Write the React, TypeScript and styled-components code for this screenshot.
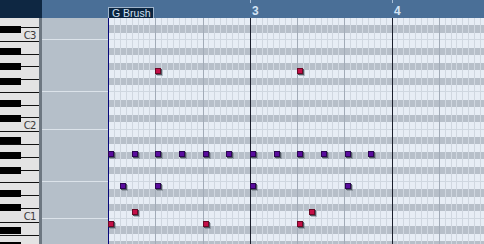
import React from 'react';
import styled, { createGlobalStyle } from 'styled-components';

const GlobalStyle = createGlobalStyle`
  html, body { margin: 0; padding: 0; background: #b6bfc9; overflow: hidden; }
  #root { width: 484px; height: 244px; }
`;

const ROW = 7.445;
const COL = 47.333 / 8;
const C3_BOTTOM = 22.6; // body coordinates
const WHITE = (ROW * 12) / 7;
const BODY_H = 226;

const NAMES = ['C', 'C#', 'D', 'D#', 'E', 'F', 'F#', 'G', 'G#', 'A', 'A#', 'B'];
const isBlack = (n: number) => NAMES[n % 12].includes('#');
const rowTop = (n: number) => C3_BOTTOM + (59 - n) * ROW;

const Editor = styled.div`
  width: 484px;
  height: 244px;
  display: grid;
  grid-template-columns: 42px 66px 376px;
  grid-template-rows: 18px 226px;
  overflow: hidden;
  font-family: "Liberation Sans", Arial, sans-serif;
`;

const Corner = styled.div`
  background: #0e2742;
`;

const Ruler = styled.div`
  grid-column: 2 / 4;
  background: #4a6f97;
  position: relative;
  overflow: hidden;
`;

const PartLabel = styled.div`
  position: absolute;
  top: 7px;
  height: 11px;
  width: 46px;
  box-sizing: border-box;
  background: #0b2540;
  border: 1px solid #9fb4cb;
  border-bottom: none;
  color: #cfe0f2;
  font-size: 10.5px;
  line-height: 10px;
  padding-left: 3px;
  white-space: nowrap;
`;

const BarNumber = styled.div`
  position: absolute;
  top: 5px;
  color: #d2e4f6;
  font-size: 12px;
  font-weight: bold;
  line-height: 13px;
`;

const Tick = styled.div`
  position: absolute;
  top: 0;
  width: 1px;
  height: 3px;
  background: #a9c0d8;
`;

const Keyboard = styled.div`
  position: relative;
  overflow: hidden;
  background: #e3e3e3;
  border-right: 3px solid #6d7781;
  display: flex;
  flex-direction: column;
`;

const WhiteKey = styled.div<{ $h: number }>`
  flex: 0 0 ${(p) => p.$h}px;
  box-sizing: border-box;
  border-bottom: 1px solid #111;
  display: flex;
  align-items: center;
  justify-content: flex-end;
  padding-right: 3px;
  padding-top: 2px;
  font-size: 10px;
  color: #3a3a3a;
  font-family: "DejaVu Sans", "Liberation Sans", sans-serif;
  letter-spacing: -0.5px;
`;

const BlackKey = styled.div`
  position: absolute;
  left: 0;
  width: 21px;
  height: 7px;
  background: #000;
`;

const Lanes = styled.div`
  display: flex;
  flex-direction: column;
  overflow: hidden;
  background: #b5bfc9;
`;

const Lane = styled.div<{ $h: number; $line: boolean }>`
  flex: 0 0 ${(p) => p.$h}px;
  box-sizing: border-box;
  border-bottom: 1px solid ${(p) => (p.$line ? '#dce3ea' : 'transparent')};
`;

const Grid = styled.div`
  display: grid;
  overflow: hidden;
  & > * { grid-area: 1 / 1; }
`;

const RowLayer = styled.div`
  display: flex;
  flex-direction: column;
`;

const Row = styled.div<{ $h: number; $black: boolean; $line: boolean }>`
  flex: 0 0 ${(p) => p.$h}px;
  box-sizing: border-box;
  background: ${(p) => (p.$black ? '#b7bfc9' : '#e7edf5')};
  border-bottom: 1px solid ${(p) => (p.$line ? '#cfd7e0' : 'transparent')};
`;

const ColLayer = styled.div`
  display: flex;
`;

const Col = styled.div<{ $kind: 'start' | 'bar' | 'beat' | 'sub' }>`
  flex: 0 0 ${COL}px;
  box-sizing: border-box;
  border-left: 1px solid
    ${(p) =>
      p.$kind === 'start'
        ? '#06067a'
        : p.$kind === 'bar'
        ? '#1b1f2c'
        : p.$kind === 'beat'
        ? '#a2abb7'
        : '#d0d7e0'};
`;

const NoteLayer = styled.div`
  position: relative;
`;

const Note = styled.div<{ $color: 'purple' | 'red' }>`
  position: absolute;
  width: 6px;
  height: 6px;
  box-sizing: border-box;
  background: ${(p) => (p.$color === 'purple' ? '#5a0c9e' : '#c50f48')};
  border: 1px solid ${(p) => (p.$color === 'purple' ? '#2c0552' : '#6a0a26')};
  box-shadow: 1px 1px 0 #505862, 2px 2px 0 rgba(80, 88, 98, 0.35);
`;

type N = { col: number; y: number; color: 'purple' | 'red' };

const notes: N[] = [
  ...[0, 4, 8, 12, 16, 20, 24, 28, 32, 36, 40, 44].map((col) => ({ col, y: 151, color: 'purple' as const })),
  ...[2, 8, 24, 40].map((col) => ({ col, y: 183, color: 'purple' as const })),
  ...[4, 34].map((col) => ({ col, y: 209, color: 'red' as const })),
  ...[0, 16, 32].map((col) => ({ col, y: 221, color: 'red' as const })),
  ...[8, 32].map((col) => ({ col, y: 68, color: 'red' as const })),
];

// rows from D3 (62) down to G#0 (32)
const rows: { n: number; h: number }[] = [];
for (let n = 62; n >= 32; n--) {
  const top = Math.max(0, rowTop(n));
  const bottom = Math.min(BODY_H, rowTop(n) + ROW);
  rows.push({ n, h: bottom - top });
}

const whiteNames = ['D', 'C', 'B', 'A', 'G', 'F', 'E'];
const whiteKeys: { label: string; h: number }[] = [];
{
  let top = C3_BOTTOM - WHITE;
  whiteKeys.push({ label: '', h: top });
  let octave = 3;
  for (let i = 0; i < 18; i++) {
    const name = whiteNames[(i + 1) % 7];
    if (name === 'B') octave -= 1;
    const h = Math.min(WHITE, BODY_H - top);
    if (h <= 0) break;
    whiteKeys.push({ label: name === 'C' ? `C${octave}` : '', h });
    top += WHITE;
  }
}

const blackKeys: number[] = [];
for (let n = 63; n >= 32; n--) if (isBlack(n)) blackKeys.push(rowTop(n));

const cols = Array.from({ length: 64 }, (_, k) =>
  k === 0 ? 'start' : k % 24 === 0 ? 'bar' : k % 8 === 0 ? 'beat' : 'sub'
) as ('start' | 'bar' | 'beat' | 'sub')[];

const lineAfter = (n: number) => n % 12 === 0 || n % 12 === 5;

export default function App() {
  return (
    <>
      <GlobalStyle />
      <Editor>
        <Corner />
        <Ruler>
          <PartLabel style={{ left: 66 }}>G Brush</PartLabel>
          {[
            { n: '3', x: 24 * COL },
            { n: '4', x: 48 * COL },
          ].map((b) => (
            <React.Fragment key={b.n}>
              <Tick style={{ left: 66 + b.x }} />
              <BarNumber style={{ left: 66 + b.x + 2 }}>{b.n}</BarNumber>
            </React.Fragment>
          ))}
        </Ruler>
        <Keyboard>
          {whiteKeys.map((k, i) => (
            <WhiteKey key={i} $h={k.h}>
              {k.label}
            </WhiteKey>
          ))}
          {blackKeys.map((t, i) => (
            <BlackKey key={i} style={{ top: t }} />
          ))}
        </Keyboard>
        <Lanes>
          {rows.map((r) => (
            <Lane key={r.n} $h={r.h} $line={lineAfter(r.n)} />
          ))}
        </Lanes>
        <Grid>
          <RowLayer>
            {rows.map((r) => (
              <Row key={r.n} $h={r.h} $black={isBlack(r.n)} $line={lineAfter(r.n)} />
            ))}
          </RowLayer>
          <ColLayer>
            {cols.map((k, i) => (
              <Col key={i} $kind={k} />
            ))}
          </ColLayer>
          <NoteLayer>
            {notes.map((n, i) => (
              <Note key={i} $color={n.color} style={{ left: n.col * COL, top: n.y - 18 }} />
            ))}
          </NoteLayer>
        </Grid>
      </Editor>
    </>
  );
}
